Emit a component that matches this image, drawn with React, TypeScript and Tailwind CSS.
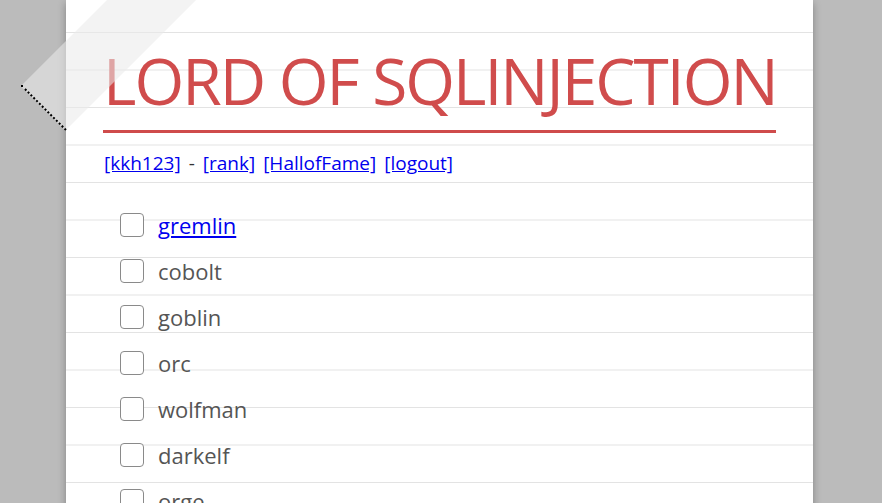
import React from "react";

const stages = ["gremlin", "cobolt", "goblin", "orc", "wolfman", "darkelf", "orge", "troll", "vampire"];

export default function App() {
  return (
    <div className="relative min-h-screen overflow-hidden bg-[#bbbbbb] font-['Open_Sans',sans-serif]">
      <div className="ml-[66px] w-[747px] min-h-screen bg-white bg-[linear-gradient(#e3e3e3_1px,transparent_1px)] bg-[length:100%_37.5px] bg-[position:0_32px] px-[37px] pt-[49px] pb-10 shadow-[0_3px_8px_rgba(0,0,0,0.3)]">
        <h1 className="whitespace-nowrap text-center text-[64px] leading-none font-normal text-[#d04c4c] tracking-[-2px]">
          LORD OF SQLINJECTION
        </h1>
        <div className="mt-[17px] h-[3px] bg-[#cf4b4b]" />
        <div className="mt-[18px] flex items-center gap-[8px] pl-px text-[19px] leading-6 text-[#333]">
          <a href="#" className="text-[#0000ee] underline">[kkh123]</a>
          <span>-</span>
          <a href="#" className="text-[#0000ee] underline">[rank]</a>
          <a href="#" className="text-[#0000ee] underline">[HallofFame]</a>
          <a href="#" className="text-[#0000ee] underline">[logout]</a>
        </div>
        <ul className="mt-[27px] pl-[17px]">
          {stages.map((s, i) => (
            <li key={s} className="flex h-[46px] items-center gap-[14px]">
              <span className="h-6 w-6 shrink-0 rounded-[4px] border border-[#8a8a8a] bg-white" />
              {i === 0 ? (
                <a href="#" className="text-[22px] text-[#0000ee] underline">{s}</a>
              ) : (
                <span className="text-[22px] text-[#555]">{s}</span>
              )}
            </li>
          ))}
        </ul>
      </div>
      <div className="absolute left-[42.5px] top-[77px] h-[63px] w-[220px] origin-left -rotate-45 border-l-2 border-dotted border-black bg-[rgba(234,234,234,0.57)]" />
    </div>
  );
}
